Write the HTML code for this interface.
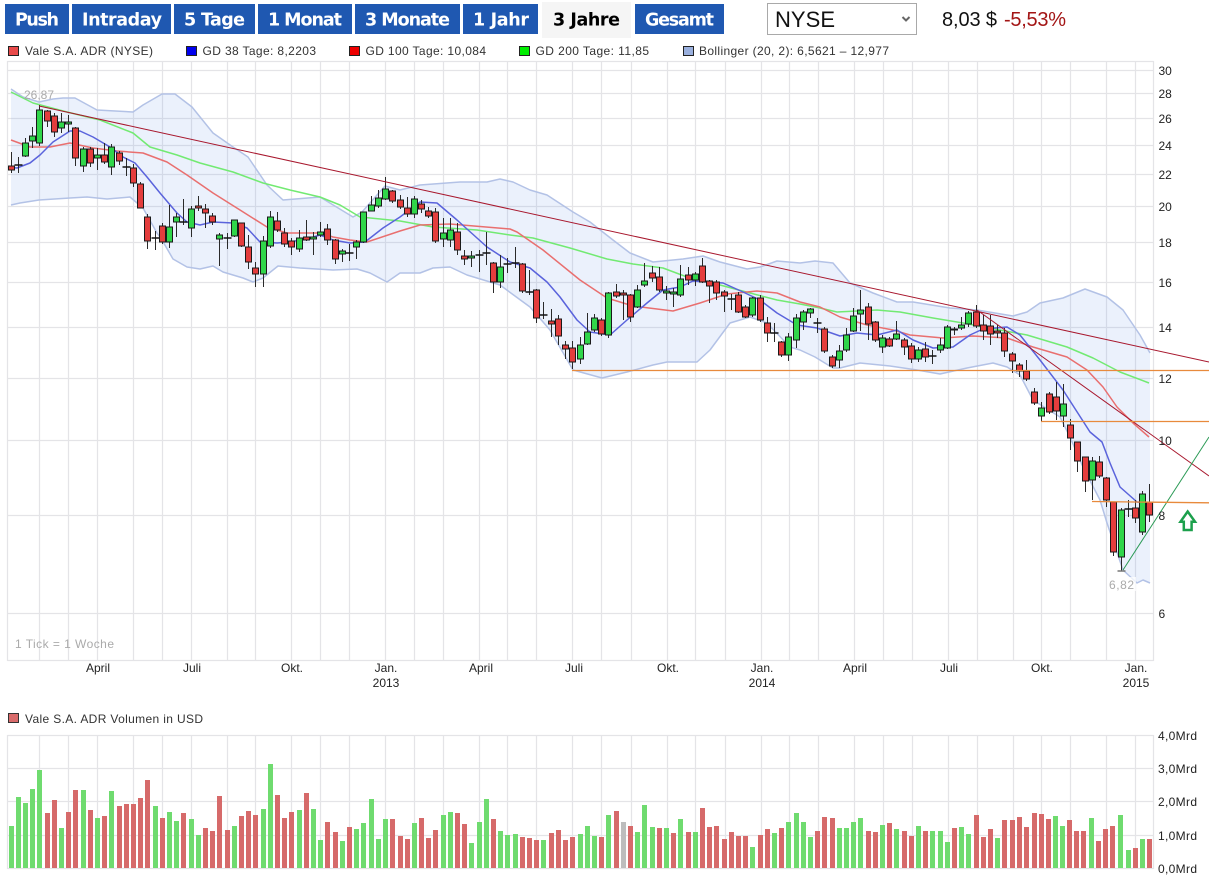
<!DOCTYPE html>
<html lang="de">
<head>
<meta charset="utf-8">
<title>Vale S.A. ADR Chart</title>
<style>
html,body{margin:0;padding:0;background:#fff;width:1209px;height:880px;overflow:hidden}
svg{display:block;filter:blur(.3px)}
text{font-family:"Liberation Sans",Arial,sans-serif}
.btn{font-family:"DejaVu Sans",Verdana,sans-serif;font-weight:700;font-size:17.5px;fill:#fff}
.lg{font-size:12px;fill:#333}
.ax{font-size:12px;fill:#222}
</style>
</head>
<body>
<svg width="1209" height="880" viewBox="0 0 1209 880" xmlns="http://www.w3.org/2000/svg">
<rect width="1209" height="880" fill="#fff"/>

<!-- Buttons -->
<g fill="#1f58b1">
<rect x="5" y="4" width="64" height="30"/>
<rect x="72" y="4" width="99" height="30"/>
<rect x="174" y="4" width="81" height="30"/>
<rect x="258" y="4" width="94" height="30"/>
<rect x="355" y="4" width="105" height="30"/>
<rect x="463" y="4" width="75" height="30"/>
<rect x="635" y="4" width="89" height="30"/>
</g>
<rect x="542" y="2" width="89" height="36" fill="#f5f5f5"/>
<text class="btn" x="15" y="25.5" textLength="44" lengthAdjust="spacing">Push</text>
<text class="btn" x="82" y="25.5" textLength="80" lengthAdjust="spacing">Intraday</text>
<text class="btn" x="184" y="25.5" textLength="61" lengthAdjust="spacing">5 Tage</text>
<text class="btn" x="268" y="25.5" textLength="74" lengthAdjust="spacing">1 Monat</text>
<text class="btn" x="365" y="25.5" textLength="85" lengthAdjust="spacing">3 Monate</text>
<text class="btn" x="473" y="25.5" textLength="56" lengthAdjust="spacing">1 Jahr</text>
<text class="btn" x="553" y="25.5" textLength="67" lengthAdjust="spacing" style="fill:#000">3 Jahre</text>
<text class="btn" x="645" y="25.5" textLength="69" lengthAdjust="spacing">Gesamt</text>

<!-- Select -->
<rect x="767.5" y="3.5" width="149" height="31" fill="#fff" stroke="#a9a9a9"/>
<text x="775" y="27" font-size="22" fill="#111" textLength="60" lengthAdjust="spacing">NYSE</text>
<path d="M902.5 17l3.5 3.5 3.5-3.5" fill="none" stroke="#666" stroke-width="2"/>

<!-- Price -->
<text x="942" y="26" font-size="20" fill="#111" textLength="55" lengthAdjust="spacing">8,03 $</text>
<text x="1004" y="26" font-size="20" fill="#a31515" textLength="62" lengthAdjust="spacing">-5,53%</text>

<!-- Legend -->
<g stroke="#222" stroke-width="1">
<rect x="8.5" y="46.5" width="10" height="9" fill="#e84a4a"/>
<rect x="186.5" y="46.5" width="10" height="9" fill="#0000ee"/>
<rect x="349.5" y="46.5" width="10" height="9" fill="#ee0000"/>
<rect x="519.5" y="46.5" width="10" height="9" fill="#00ee00"/>
<rect x="683.5" y="46.5" width="10" height="9" fill="#9ab0de"/>
</g>
<text class="lg" x="25" y="55" textLength="128" lengthAdjust="spacing">Vale S.A. ADR (NYSE)</text>
<text class="lg" x="202.5" y="55" textLength="113.5" lengthAdjust="spacing">GD 38 Tage: 8,2203</text>
<text class="lg" x="365.5" y="55" textLength="120.5" lengthAdjust="spacing">GD 100 Tage: 10,084</text>
<text class="lg" x="535.5" y="55" textLength="113.5" lengthAdjust="spacing">GD 200 Tage: 11,85</text>
<text class="lg" x="699" y="55" textLength="190" lengthAdjust="spacing">Bollinger (20, 2): 6,5621 – 12,977</text>

<!-- Main grid -->
<g fill="none" stroke="#e4e4e7" stroke-width="1.2">
<path d="M7.5 61.5H1153.5M7.5 70.5H1153.5M7.5 93.5H1153.5M7.5 118.5H1153.5M7.5 145.5H1153.5M7.5 174.5H1153.5M7.5 206.5H1153.5M7.5 242.5H1153.5M7.5 282.5H1153.5M7.5 327.5H1153.5M7.5 378.5H1153.5M7.5 440.5H1153.5M7.5 515.5H1153.5M7.5 613.5H1153.5M7.5 660.5H1153.5"/>
<path d="M7.5 61V661M39.5 61V661M68.5 61V661M97.5 61V661M133.5 61V661M162.5 61V661M191.5 61V661M227.5 61V661M255.5 61V661M291.5 61V661M320.5 61V661M349.5 61V661M385.5 61V661M414.5 61V661M443.5 61V661M479.5 61V661M507.5 61V661M536.5 61V661M572.5 61V661M601.5 61V661M631.5 61V661M667.5 61V661M695.5 61V661M725.5 61V661M761.5 61V661M789.5 61V661M818.5 61V661M854.5 61V661M883.5 61V661M912.5 61V661M948.5 61V661M977.5 61V661M1013.5 61V661M1041.5 61V661M1070.5 61V661M1106.5 61V661M1135.5 61V661M1153.5 61V661"/>
</g>

<!-- Bollinger band -->
<path fill="#5f90e6" fill-opacity=".125" stroke="none" d="M11 89L23 97 39 102 53 99 63 98 75 98 97 110 133 112 143 105 162 94 175 94 192 107 213 133 233 147 248 157 267 185 283 200 320 197 353 217 362 212 385 186 400 190 420 185 460 182 487 182 500 179 513 182 530 190 547 195 573 212 590 222 613 240 630 253 653 262 683 259 703 256 720 262 747 269 760 267 777 261 800 263 815 261 833 263 850 283 873 293 897 302 913 302 950 308 977 310 1013 316 1027 312 1040 303 1063 298 1085 289 1107 297 1123 310 1140 335 1150 353V583L1143 580 1137 583 1123 570 1107 523 1100 500 1083 467 1070 437 1060 417 1033 400 1020 375 1007 367 993 363 967 368 940 374 917 370 890 366 860 363 840 368 833 368 815 357 800 350 790 347 767 323 750 317 730 323 710 350 697 362 667 362 653 365 627 372 602 378 573 370 550 330 530 307 500 285 467 275 450 267 433 268 420 273 400 273 387 282 370 273 357 269 333 270 300 268 278 266 263 278 253 282 243 278 223 272 213 266 200 269 187 267 173 259 162 240 157 233 143 208 130 197 107 199 87 197 70 198 39 200 20 203 11 205Z"/>
<g fill="none" stroke="#b3c2e6" stroke-width="1.5" stroke-linejoin="round">
<path d="M11 89L23 97 39 102 53 99 63 98 75 98 97 110 133 112 143 105 162 94 175 94 192 107 213 133 233 147 248 157 267 185 283 200 320 197 353 217 362 212 385 186 400 190 420 185 460 182 487 182 500 179 513 182 530 190 547 195 573 212 590 222 613 240 630 253 653 262 683 259 703 256 720 262 747 269 760 267 777 261 800 263 815 261 833 263 850 283 873 293 897 302 913 302 950 308 977 310 1013 316 1027 312 1040 303 1063 298 1085 289 1107 297 1123 310 1140 335 1150 353"/>
<path d="M1150 583L1143 580 1137 583 1123 570 1107 523 1100 500 1083 467 1070 437 1060 417 1033 400 1020 375 1007 367 993 363 967 368 940 374 917 370 890 366 860 363 840 368 833 368 815 357 800 350 790 347 767 323 750 317 730 323 710 350 697 362 667 362 653 365 627 372 602 378 573 370 550 330 530 307 500 285 467 275 450 267 433 268 420 273 400 273 387 282 370 273 357 269 333 270 300 268 278 266 263 278 253 282 243 278 223 272 213 266 200 269 187 267 173 259 162 240 157 233 143 208 130 197 107 199 87 197 70 198 39 200 20 203 11 205"/>
</g>

<!-- Moving averages -->
<g fill="none" stroke-width="1.5" stroke-linejoin="round">
<path stroke="#72ea72" d="M11 92L33 103 67 112 100 120 133 133 150 147 177 155 200 163 233 172 263 183 290 190 320 197 340 205 360 217 400 221 433 227 477 230 510 235 533 238 570 248 607 259 633 264 663 268 687 277 720 285 750 293 777 300 800 304 820 308 837 312 877 310 900 312 933 318 963 323 1000 330 1027 335 1067 347 1093 358 1120 372 1149 383"/>
<path stroke="#e96f6f" d="M11 140L30 147 50 147 70 143 93 148 117 151 143 153 167 162 187 175 213 193 240 210 267 227 287 233 320 233 333 237 350 240 367 242 400 231 420 225 450 224 510 229 517 232 543 250 580 280 607 298 633 306 673 311 700 303 727 294 757 291 777 293 800 302 820 307 840 317 867 325 893 330 910 335 943 338 973 336 1007 338 1033 347 1067 357 1087 370 1103 387 1117 407 1133 423 1149 437"/>
<path stroke="#5a63dc" d="M8 167L17 168 30 163 40 155 53 142 70 131 80 131 93 137 110 147 123 157 135 163 147 177 160 193 177 213 187 222 200 225 213 222 233 223 247 228 260 242 277 243 290 242 310 238 320 235 333 240 350 243 365 242 383 228 400 217 420 202 437 203 457 220 487 247 510 262 530 268 547 282 560 297 577 320 590 332 610 335 627 320 647 303 663 290 680 287 693 281 707 282 723 283 743 292 760 300 777 313 797 325 817 328 840 336 857 333 877 335 897 330 913 340 933 348 953 347 970 335 983 329 1007 327 1020 335 1040 360 1063 390 1090 432 1102 442 1110 463 1120 487 1137 502 1147 503"/>
</g>

<!-- Candle wicks -->
<path fill="none" stroke="#2a2a2a" stroke-width="1" d="M11.5 152V173M18.5 157V173M25.5 138V157M32.5 127V148M39.5 105V146M47.5 110V127M54.5 113V137M61.5 113V133M68.5 115V132M75.5 127V166M83.5 147V172M90.5 147V167M97.5 148V170M104.5 143V164M111.5 144V175M119.5 151V165M126.5 158V176M133.5 164V187M140.5 182V208M147.5 214V249M155.5 231V250M162.5 223V244M169.5 205V248M176.5 213V237M183.5 199V225M191.5 206V237M198.5 196V211M205.5 204V228M212.5 213V225M219.5 233V266M227.5 233V249M234.5 220V237M241.5 223V247M248.5 235V269M255.5 262V287M263.5 236V287M270.5 211V248M277.5 212V232M284.5 228V247M291.5 238V255M299.5 230V252M306.5 220V241M313.5 232V255M320.5 222V237M327.5 224V245M335.5 239V264M342.5 249V262M349.5 244V261M356.5 240V259M363.5 212V243M371.5 196V211M378.5 190V208M385.5 177V200M392.5 190V203M400.5 195V209M407.5 197V217M414.5 196V218M421.5 200V213M428.5 207V218M435.5 208V243M443.5 218V247M450.5 218V247M457.5 223V255M464.5 250V265M471.5 251V267M479.5 250V272M486.5 232V265M493.5 262V293M500.5 255V288M507.5 258V273M515.5 247V268M522.5 263V293M529.5 270V295M536.5 289V323M543.5 302V319M551.5 309V337M558.5 315V345M565.5 341V359M572.5 341V369M580.5 337V364M587.5 313V345M594.5 314V332M601.5 318V336M608.5 292V338M616.5 284V298M623.5 290V320M630.5 294V322M637.5 285V308M644.5 263V287M652.5 266V282M659.5 267V292M666.5 286V300M673.5 288V307M680.5 265V297M688.5 267V285M695.5 272V286M702.5 258V283M709.5 280V303M716.5 280V300M724.5 290V312M731.5 294V310M738.5 292V313M745.5 305V318M752.5 297V317M760.5 295V322M767.5 317V342M774.5 323V342M781.5 341V357M788.5 333V361M796.5 314V348M803.5 310V330M810.5 308V318M817.5 318V333M824.5 327V353M832.5 355V368M839.5 345V368M846.5 328V352M853.5 308V332M860.5 290V331M868.5 303V340M875.5 321V342M882.5 335V353M889.5 337V347M896.5 321V340M904.5 338V355M911.5 343V363M918.5 347V362M925.5 342V362M932.5 350V364M940.5 338V353M947.5 325V349M954.5 327V335M961.5 317V330M968.5 311V327M976.5 305V328M983.5 315V340M990.5 315V345M997.5 325V338M1004.5 328V357M1012.5 352V373M1019.5 363V377M1026.5 360V381M1034.5 388V405M1041.5 402V422M1049.5 392V414M1056.5 382V420M1063.5 384V427M1070.5 419V450M1077.5 442V472M1085.5 457V492M1092.5 457V500M1099.5 456V478M1106.5 477V507M1113.5 502V556M1121.5 508V571M1128.5 500V517M1135.5 500V523M1142.5 491V535M1149.5 484V522"/>

<!-- Dojis -->
<path fill="none" stroke="#111" stroke-width="1.5" d="M14.5 165h8M122.5 167h8M151.5 238h8M179.5 222h8M223.5 238h8M345.5 253h8M475.5 255h8M482.5 253h8M503.5 264h8M511.5 263h8M525.5 292h8M539.5 315h8M727.5 299h8M770.5 333h8M813.5 323h8M928.5 356h8M1124.5 509h8"/>
<path fill="none" stroke="#777" stroke-width="1.5" d="M1117.5 571h8"/>

<!-- Red bodies -->
<path fill="#e43d3d" stroke="#1a1a1a" stroke-width="1" d="M8.5 166h6v4h-6zM44.5 111h6v10h-6zM51.5 116h6v16h-6zM72.5 128h6v30h-6zM87.5 149h6v14h-6zM101.5 155h6v7h-6zM116.5 153h6v8h-6zM130.5 168h6v15h-6zM137.5 184h6v24h-6zM144.5 217h6v24h-6zM159.5 226h6v16h-6zM195.5 206h6v2h-6zM202.5 209h6v4h-6zM209.5 216h6v6h-6zM238.5 223h6v23h-6zM245.5 247h6v15h-6zM252.5 268h6v6h-6zM274.5 221h6v9h-6zM281.5 233h6v11h-6zM288.5 241h6v6h-6zM303.5 237h6v3h-6zM324.5 229h6v11h-6zM332.5 240h6v19h-6zM389.5 191h6v10h-6zM397.5 200h6v7h-6zM404.5 208h6v6h-6zM418.5 204h6v5h-6zM425.5 211h6v5h-6zM432.5 212h6v29h-6zM454.5 232h6v18h-6zM461.5 256h6v3h-6zM490.5 263h6v19h-6zM519.5 264h6v27h-6zM533.5 290h6v28h-6zM548.5 321h6v3h-6zM555.5 319h6v17h-6zM562.5 345h6v4h-6zM569.5 348h6v14h-6zM598.5 320h6v14h-6zM613.5 292h6v4h-6zM620.5 293h6v2h-6zM627.5 295h6v22h-6zM649.5 273h6v5h-6zM656.5 277h6v13h-6zM685.5 275h6v5h-6zM699.5 266h6v16h-6zM706.5 281h6v5h-6zM713.5 282h6v11h-6zM721.5 292h6v4h-6zM735.5 295h6v17h-6zM742.5 307h6v10h-6zM757.5 298h6v22h-6zM764.5 323h6v10h-6zM778.5 342h6v13h-6zM821.5 329h6v22h-6zM829.5 357h6v9h-6zM865.5 307h6v17h-6zM872.5 322h6v18h-6zM886.5 339h6v7h-6zM901.5 340h6v7h-6zM908.5 346h6v13h-6zM922.5 349h6v8h-6zM951.5 329h6v1h-6zM973.5 312h6v14h-6zM980.5 325h6v6h-6zM987.5 326h6v8h-6zM994.5 331h6v2h-6zM1001.5 333h6v18h-6zM1009.5 354h6v7h-6zM1016.5 365h6v6h-6zM1023.5 371h6v8h-6zM1031.5 392h6v11h-6zM1046.5 394h6v18h-6zM1053.5 397h6v14h-6zM1067.5 425h6v13h-6zM1074.5 442h6v19h-6zM1082.5 457h6v24h-6zM1096.5 462h6v14h-6zM1103.5 478h6v22h-6zM1110.5 502h6v50h-6zM1132.5 508h6v10h-6zM1146.5 502h6v13h-6z"/>

<!-- Green bodies -->
<path fill="#30d64a" stroke="#1a1a1a" stroke-width="1" d="M22.5 143h6v13h-6zM29.5 136h6v5h-6zM36.5 110h6v33h-6zM58.5 122h6v6h-6zM65.5 122h6v2h-6zM80.5 149h6v17h-6zM94.5 155h6v3h-6zM108.5 147h6v20h-6zM166.5 227h6v15h-6zM173.5 217h6v5h-6zM188.5 209h6v19h-6zM216.5 235h6v4h-6zM231.5 220h6v16h-6zM260.5 241h6v33h-6zM267.5 217h6v29h-6zM296.5 238h6v11h-6zM310.5 237h6v2h-6zM317.5 232h6v3h-6zM339.5 251h6v3h-6zM353.5 242h6v5h-6zM360.5 212h6v30h-6zM368.5 205h6v6h-6zM375.5 198h6v8h-6zM382.5 189h6v10h-6zM411.5 199h6v15h-6zM440.5 233h6v6h-6zM447.5 230h6v10h-6zM468.5 256h6v2h-6zM497.5 267h6v15h-6zM577.5 345h6v14h-6zM584.5 332h6v12h-6zM591.5 318h6v12h-6zM605.5 293h6v42h-6zM634.5 290h6v17h-6zM641.5 281h6v4h-6zM663.5 291h6v2h-6zM670.5 292h6v2h-6zM677.5 279h6v16h-6zM692.5 274h6v6h-6zM749.5 298h6v17h-6zM785.5 337h6v18h-6zM793.5 318h6v22h-6zM800.5 312h6v10h-6zM807.5 309h6v4h-6zM836.5 351h6v9h-6zM843.5 335h6v15h-6zM850.5 316h6v15h-6zM857.5 310h6v4h-6zM879.5 338h6v9h-6zM893.5 334h6v5h-6zM915.5 350h6v9h-6zM937.5 345h6v5h-6zM944.5 327h6v21h-6zM958.5 325h6v3h-6zM965.5 313h6v11h-6zM1038.5 408h6v8h-6zM1060.5 404h6v12h-6zM1089.5 461h6v19h-6zM1118.5 510h6v47h-6zM1139.5 494h6v38h-6z"/>

<!-- Trend lines -->
<g fill="none" stroke-width="1">
<path stroke="#a8182e" d="M39 106L1209 362M977 310L1209 476"/>
<path stroke="#2a9a55" d="M1123 570L1209 437"/>
<path stroke="#e88a3c" stroke-width="1.3" d="M572 370.5H1209M1041 421.5H1209M1092 501.5L1209 502.8"/>
</g>

<!-- Arrow -->
<path d="M1187.7 511.5L1180.5 521.7H1183.8V530H1191.6V521.7H1195L1187.7 511.5Z" fill="#fff" stroke="#1ca04c" stroke-width="2.5" stroke-linejoin="miter"/>

<!-- Chart notes -->
<text x="24" y="99" font-size="12" fill="#aaa" textLength="30" lengthAdjust="spacing">26,87</text>
<rect x="1107" y="577" width="29" height="14" fill="#fff" fill-opacity=".75"/>
<text x="1109" y="589" font-size="12" fill="#aaa" textLength="25" lengthAdjust="spacing">6,82</text>
<text x="15" y="648" font-size="12" fill="#aaa" textLength="99" lengthAdjust="spacing">1 Tick = 1 Woche</text>

<!-- Price axis -->
<g class="ax">
<text class="ax" x="1158.5" y="75">30</text>
<text class="ax" x="1158.5" y="98">28</text>
<text class="ax" x="1158.5" y="123">26</text>
<text class="ax" x="1158.5" y="150">24</text>
<text class="ax" x="1158.5" y="179">22</text>
<text class="ax" x="1158.5" y="211">20</text>
<text class="ax" x="1158.5" y="247">18</text>
<text class="ax" x="1158.5" y="287">16</text>
<text class="ax" x="1158.5" y="332">14</text>
<text class="ax" x="1158.5" y="383">12</text>
<text class="ax" x="1158.5" y="445">10</text>
<text class="ax" x="1158.5" y="520">8</text>
<text class="ax" x="1158.5" y="618">6</text>
</g>

<!-- Time axis -->
<g text-anchor="middle">
<text class="ax" x="98" y="672">April</text>
<text class="ax" x="192" y="672">Juli</text>
<text class="ax" x="292" y="672">Okt.</text>
<text class="ax" x="386" y="672">Jan.</text>
<text class="ax" x="386" y="687">2013</text>
<text class="ax" x="481" y="672">April</text>
<text class="ax" x="574" y="672">Juli</text>
<text class="ax" x="668" y="672">Okt.</text>
<text class="ax" x="762" y="672">Jan.</text>
<text class="ax" x="762" y="687">2014</text>
<text class="ax" x="855" y="672">April</text>
<text class="ax" x="949" y="672">Juli</text>
<text class="ax" x="1042" y="672">Okt.</text>
<text class="ax" x="1136" y="672">Jan.</text>
<text class="ax" x="1136" y="687">2015</text>
</g>

<!-- Volume legend -->
<rect x="8.5" y="713.5" width="10" height="9" fill="#d96b6b" stroke="#333"/>
<text class="lg" x="25" y="723" textLength="178" lengthAdjust="spacing">Vale S.A. ADR Volumen in USD</text>

<!-- Volume grid -->
<path fill="none" stroke="#e4e4e7" stroke-width="1.2" d="M7.5 735.5H1153.5M7.5 768.5H1153.5M7.5 801.5H1153.5M7.5 835.5H1153.5M7.5 868.5H1153.5M7.5 735V869M39.5 735V869M68.5 735V869M97.5 735V869M133.5 735V869M162.5 735V869M191.5 735V869M227.5 735V869M255.5 735V869M291.5 735V869M320.5 735V869M349.5 735V869M385.5 735V869M414.5 735V869M443.5 735V869M479.5 735V869M507.5 735V869M536.5 735V869M572.5 735V869M601.5 735V869M631.5 735V869M667.5 735V869M695.5 735V869M725.5 735V869M761.5 735V869M789.5 735V869M818.5 735V869M854.5 735V869M883.5 735V869M912.5 735V869M948.5 735V869M977.5 735V869M1013.5 735V869M1041.5 735V869M1070.5 735V869M1106.5 735V869M1135.5 735V869M1153.5 735V869"/>

<!-- Volume bars -->
<path fill="none" stroke="#6fdb6f" stroke-width="5" d="M11.5 826V868M18.5 797V868M25.5 803V868M32.5 789V868M39.5 770V868M61.5 828V868M83.5 790V868M97.5 818V868M111.5 791V868M155.5 806V868M169.5 812V868M176.5 821V868M191.5 819V868M198.5 835V868M234.5 826V868M263.5 809V868M270.5 764V868M299.5 810V868M313.5 809V868M320.5 840V868M342.5 841V868M356.5 829V868M363.5 823V868M371.5 799V868M378.5 839V868M385.5 819V868M414.5 823V868M443.5 815V868M450.5 812V868M471.5 843V868M479.5 822V868M486.5 799V868M500.5 831V868M507.5 835V868M515.5 834V868M543.5 840V868M580.5 834V868M587.5 826V868M594.5 836V868M608.5 815V868M637.5 832V868M644.5 805V868M652.5 827V868M666.5 828V868M680.5 819V868M695.5 832V868M752.5 847V868M774.5 833V868M788.5 822V868M796.5 813V868M803.5 822V868M810.5 837V868M839.5 828V868M846.5 828V868M853.5 822V868M860.5 818V868M882.5 825V868M896.5 829V868M918.5 826V868M932.5 831V868M940.5 831V868M947.5 842V868M961.5 827V868M968.5 834V868M997.5 838V868M1055.5 816V868M1062.5 826V868M1091.5 818V868M1120.5 815V868M1128.5 850V868M1142.5 839V868"/>
<path fill="none" stroke="#d66a6a" stroke-width="5" d="M47.5 813V868M54.5 800V868M68.5 812V868M75.5 790V868M90.5 810V868M104.5 816V868M119.5 806V868M126.5 804V868M133.5 804V868M140.5 798V868M147.5 780V868M162.5 818V868M183.5 813V868M205.5 828V868M212.5 831V868M219.5 796V868M227.5 830V868M241.5 816V868M248.5 811V868M255.5 815V868M277.5 795V868M284.5 818V868M291.5 812V868M306.5 793V868M327.5 822V868M335.5 832V868M349.5 827V868M392.5 819V868M400.5 836V868M407.5 839V868M421.5 818V868M428.5 838V868M435.5 830V868M457.5 813V868M464.5 824V868M493.5 819V868M522.5 837V868M529.5 838V868M536.5 840V868M551.5 833V868M558.5 830V868M565.5 840V868M572.5 837V868M601.5 837V868M616.5 811V868M630.5 826V868M659.5 828V868M673.5 833V868M688.5 832V868M702.5 808V868M709.5 827V868M716.5 826V868M724.5 839V868M731.5 832V868M738.5 836V868M745.5 836V868M760.5 835V868M767.5 829V868M781.5 828V868M817.5 831V868M824.5 817V868M832.5 818V868M868.5 831V868M875.5 832V868M889.5 823V868M904.5 831V868M911.5 836V868M925.5 831V868M954.5 828V868M976.5 815V868M983.5 837V868M990.5 829V868M1004.5 820V868M1012.5 820V868M1019.5 817V868M1026.5 827V868M1034.5 813V868M1041.5 814V868M1048.5 819V868M1069.5 820V868M1076.5 831V868M1083.5 831V868M1098.5 841V868M1105.5 829V868M1112.5 826V868M1135.5 848V868M1149.5 839V868"/>
<path fill="none" stroke="#bdbdbd" stroke-width="5" d="M623.5 822V868"/>

<!-- Volume axis -->
<text class="ax" x="1158" y="740" textLength="39" lengthAdjust="spacing">4,0Mrd</text>
<text class="ax" x="1158" y="773" textLength="39" lengthAdjust="spacing">3,0Mrd</text>
<text class="ax" x="1158" y="806" textLength="39" lengthAdjust="spacing">2,0Mrd</text>
<text class="ax" x="1158" y="840" textLength="39" lengthAdjust="spacing">1,0Mrd</text>
<text class="ax" x="1158" y="873" textLength="39" lengthAdjust="spacing">0,0Mrd</text>
</svg>
</body>
</html>
